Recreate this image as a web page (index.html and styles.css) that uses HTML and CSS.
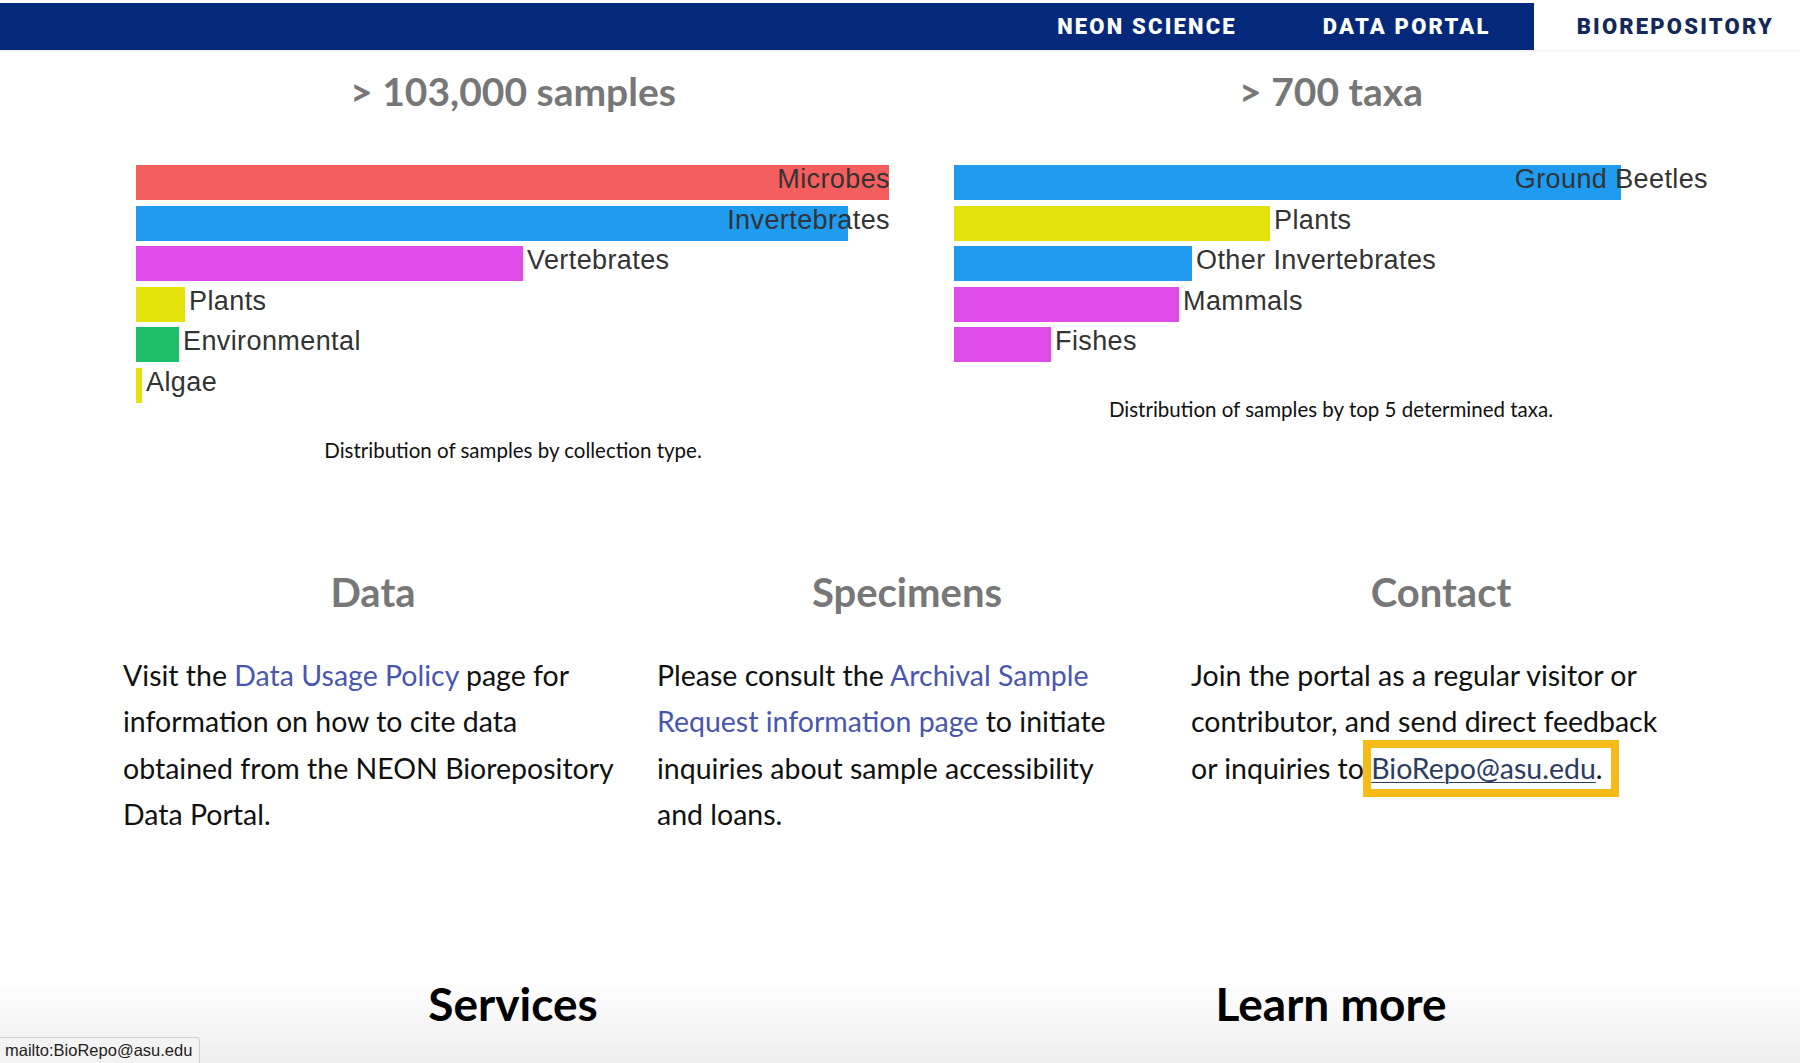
FILE: index.html
```html
<!DOCTYPE html>
<html lang="en">
<head>
<meta charset="utf-8">
<title>NEON Biorepository</title>
<link rel="stylesheet" href="styles.css">
</head>
<body>
<header class="topnav">
  <nav class="topnav-links">
    <a class="topnav-item" href="#">NEON SCIENCE</a>
    <a class="topnav-item" href="#">DATA PORTAL</a>
    <a class="topnav-item active" href="#">BIOREPOSITORY</a>
  </nav>
</header>

<main>
  <section class="stats">
    <div class="stat">
      <h2 class="stat-title">&gt; 103,000 samples</h2>
      <div class="chart">
        <div class="bar-row"><div class="bar red" style="width:753px"></div><span class="bar-label end">Microbes</span></div>
        <div class="bar-row"><div class="bar blue" style="width:712px"></div><span class="bar-label end">Invertebrates</span></div>
        <div class="bar-row"><div class="bar magenta" style="width:387px"></div><span class="bar-label">Vertebrates</span></div>
        <div class="bar-row"><div class="bar yellow" style="width:49px"></div><span class="bar-label">Plants</span></div>
        <div class="bar-row"><div class="bar green" style="width:43px"></div><span class="bar-label">Environmental</span></div>
        <div class="bar-row"><div class="bar yellow" style="width:6px"></div><span class="bar-label">Algae</span></div>
      </div>
      <p class="caption">Distribution of samples by collection type.</p>
    </div>
    <div class="stat">
      <h2 class="stat-title">&gt; 700 taxa</h2>
      <div class="chart">
        <div class="bar-row"><div class="bar blue" style="width:667px"></div><span class="bar-label end">Ground Beetles</span></div>
        <div class="bar-row"><div class="bar yellow" style="width:316px"></div><span class="bar-label">Plants</span></div>
        <div class="bar-row"><div class="bar blue" style="width:238px"></div><span class="bar-label">Other Invertebrates</span></div>
        <div class="bar-row"><div class="bar magenta" style="width:225px"></div><span class="bar-label">Mammals</span></div>
        <div class="bar-row"><div class="bar magenta" style="width:97px"></div><span class="bar-label">Fishes</span></div>
      </div>
      <p class="caption">Distribution of samples by top 5 determined taxa.</p>
    </div>
  </section>

  <section class="info">
    <div class="info-col">
      <h3 class="info-title">Data</h3>
      <p class="info-text text-data">Visit the <a class="link" href="#">Data Usage Policy</a> page for information on how to cite data obtained from the NEON Biorepository Data Portal.</p>
    </div>
    <div class="info-col">
      <h3 class="info-title">Specimens</h3>
      <p class="info-text text-specimens">Please consult the <a class="link" href="#">Archival Sample Request information page</a> to initiate inquiries about sample accessibility and loans.</p>
    </div>
    <div class="info-col">
      <h3 class="info-title">Contact</h3>
      <p class="info-text text-contact">Join the portal as a regular visitor or contributor, and send direct feedback or inquiries to <span class="focus-ring"><a class="mail" href="mailto:BioRepo@asu.edu">BioRepo@asu.edu</a>.</span></p>
    </div>
  </section>

  <section class="more">
    <h2 class="more-title">Services</h2>
    <h2 class="more-title">Learn more</h2>
  </section>
</main>

<div class="fade"></div>
<div class="status">mailto:BioRepo@asu.edu</div>
</body>
</html>
```

FILE: styles.css
```css
html, body {
  margin: 0;
  padding: 0;
  background: #ffffff;
}

body {
  font-family: Lato, "Noto Sans", sans-serif;
  color: #111;
  overflow: hidden;
  height: 1063px;
}

/* ---------- top navigation ---------- */
.topnav {
  margin-top: 3px;
  height: 47px;
  background: #04297a;
  box-shadow: 0 1px 2px rgba(0, 0, 0, 0.08);
}

.topnav-links {
  display: flex;
  justify-content: flex-end;
  height: 100%;
}

.topnav-item {
  display: flex;
  align-items: center;
  padding: 0 43px;
  font-family: Roboto, "Liberation Sans", sans-serif;
  font-weight: 900;
  font-size: 22px;
  letter-spacing: 2.2px;
  color: #ffffff;
  text-decoration: none;
}

.topnav-item.active {
  background: #ffffff;
  color: #14285a;
  padding-right: 26px;
}

/* ---------- stats with charts ---------- */
.stats {
  display: grid;
  grid-template-columns: 818px 818px;
  padding-left: 104px;
}

.stat {
  display: flex;
  flex-direction: column;
  align-items: center;
}

.stat-title {
  margin: 18px 0 0;
  font-size: 39px;
  line-height: 46px;
  font-weight: 700;
  color: #777777;
}

.chart {
  width: 754px;
  margin-top: 51px;
  display: flex;
  flex-direction: column;
  gap: 5.6px;
}

.bar-row {
  position: relative;
  display: flex;
  height: 35px;
}

.bar {
  flex: none;
  height: 35px;
}

.bar.red { background: #f55e5e; }
.bar.blue { background: #1f9bf0; }
.bar.magenta { background: #df4be8; }
.bar.yellow { background: #e3e30b; }
.bar.green { background: #1ebf6b; }

.bar-label {
  margin-left: 4px;
  font-family: "Liberation Sans", Arial, sans-serif;
  font-size: 27px;
  letter-spacing: 0.4px;
  line-height: 28px;
  color: #333333;
  white-space: nowrap;
}

.bar-label.end {
  position: absolute;
  top: 0;
  right: 0;
  margin: 0;
}

.caption {
  margin: 33px 0 0;
  font-size: 20.5px;
  line-height: 28px;
  color: #111;
}

/* ---------- info columns ---------- */
.info {
  display: grid;
  grid-template-columns: repeat(3, 500px);
  column-gap: 34px;
  padding-left: 123px;
  margin-top: 104px;
}

.info-title {
  margin: 0;
  text-align: center;
  font-size: 40px;
  line-height: 48px;
  font-weight: 700;
  color: #777777;
}

.info-text {
  margin: 36px 0 0;
  font-size: 28.5px;
  line-height: 46.5px;
  color: #111;
}

.text-data { max-width: 500px; }
.text-specimens { max-width: 470px; }
.text-contact { max-width: 485px; }

.link {
  color: #4a56ad;
  text-decoration: none;
}

.focus-ring {
  outline: 8px solid #f7bb17;
  padding: 3px 8px 4px 0;
}

.mail {
  color: #2c3d63;
  text-decoration: underline;
  text-decoration-thickness: 1px;
  text-underline-offset: 3px;
}

/* ---------- bottom headings ---------- */
.more {
  display: grid;
  grid-template-columns: 818px 818px;
  padding-left: 104px;
  margin-top: 138px;
}

.more-title {
  margin: 0;
  text-align: center;
  font-size: 46px;
  line-height: 56px;
  font-weight: 700;
  color: #000;
}

/* ---------- overlays ---------- */
.fade {
  position: fixed;
  left: 0;
  right: 0;
  bottom: 0;
  height: 85px;
  background: linear-gradient(to bottom, rgba(0, 0, 0, 0), rgba(0, 0, 0, 0.07));
  pointer-events: none;
}

.status {
  position: fixed;
  left: 0;
  bottom: 0;
  width: 194px;
  height: 25px;
  padding-left: 5px;
  background: #f3f3f3;
  border: 1px solid #cfcfcf;
  border-left: none;
  border-bottom: none;
  border-top-right-radius: 4px;
  font-family: "Liberation Sans", Arial, sans-serif;
  font-size: 16.5px;
  line-height: 25px;
  color: #222;
}
```
